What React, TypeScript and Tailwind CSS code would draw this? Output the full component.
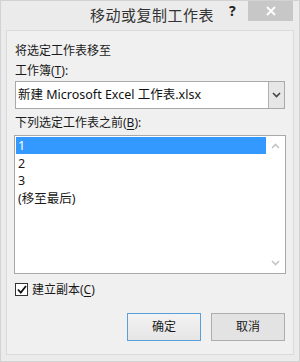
import React from "react";

const font = { fontFamily: '"Noto Sans", "Noto Sans CJK SC", sans-serif' };

export default function App() {
  return (
    <div
      className="w-[300px] h-[362px] bg-[#ebebeb] border border-[#d2d2d2] flex flex-col text-[12px] text-[#1a1a1a] overflow-hidden"
      style={font}
    >
      {/* title bar */}
      <div className="h-[29px] shrink-0 flex items-start relative">
        <div className="flex-1 h-[29px] flex items-center justify-center pl-[4px]">
          <span className="text-[15px] text-[#333] leading-none tracking-[0.5px]">移动或复制工作表</span>
        </div>
        <div className="absolute left-[228px] top-[2px] text-[14px] font-bold text-[#222] leading-[16px]">?</div>
        <div className="absolute left-[247px] top-0 w-[45px] h-[20px] bg-[#c7c7c7] flex items-center justify-center">
          <svg width="10" height="10" viewBox="0 0 10 10">
            <path d="M1 1 L9 9 M9 1 L1 9" stroke="#fff" strokeWidth="1.8" />
          </svg>
        </div>
      </div>
      {/* client */}
      <div className="mx-[5px] h-[325px] bg-[#f0f0f0] border border-[#dadada] flex flex-col px-[8px]">
        <div className="mt-[11px] h-[17px] leading-[17px]">将选定工作表移至</div>
        <div className="mt-[3px] h-[17px] leading-[17px]">
          工作簿(<span className="underline underline-offset-2">T</span>):
        </div>
        <div className="mt-[2px] h-[28px] bg-white border border-[#a9a9a9] flex items-stretch">
          <div className="flex-1 pl-[2px] flex items-center text-[12.5px] text-[#111]">
            新建 Microsoft Excel 工作表.xlsx
          </div>
          <div className="w-[16px] bg-[#e6e6e6] border-l border-[#b0b0b0] flex items-center justify-center">
            <svg width="9" height="6" viewBox="0 0 9 6">
              <path d="M1 1 L4.5 4.5 L8 1" stroke="#444" strokeWidth="1.6" fill="none" />
            </svg>
          </div>
        </div>
        <div className="mt-[5px] h-[17px] leading-[17px]">
          下列选定工作表之前(<span className="underline underline-offset-2">B</span>):
        </div>
        <div className="mt-[4px] -mx-[1px] h-[139px] bg-white border border-[#a9a9a9] flex p-[1px]">
          <div className="flex-1 flex flex-col text-[12.5px]">
            <div className="h-[17px] bg-[#3399ff] text-white pl-[2px] leading-[17px]">1</div>
            <div className="h-[17px] pl-[2px] leading-[17px] mt-[1px]">2</div>
            <div className="h-[17px] pl-[2px] leading-[17px]">3</div>
            <div className="h-[17px] pl-[2px] leading-[17px] mt-[1px]">(移至最后)</div>
          </div>
          <div className="w-[18px] flex flex-col items-center justify-between py-[6px]">
            <svg width="9" height="6" viewBox="0 0 9 6">
              <path d="M1 5 L4.5 1.5 L8 5" stroke="#c4c4c4" strokeWidth="1.6" fill="none" />
            </svg>
            <svg width="9" height="6" viewBox="0 0 9 6">
              <path d="M1 1 L4.5 4.5 L8 1" stroke="#c4c4c4" strokeWidth="1.6" fill="none" />
            </svg>
          </div>
        </div>
        <div className="mt-[8px] h-[15px] flex items-center gap-[4px]">
          <div className="w-[13px] h-[13px] bg-white border border-[#333] flex items-center justify-center">
            <svg width="10" height="9" viewBox="0 0 10 9">
              <path d="M1 4.5 L3.8 7.5 L9 1" stroke="#111" strokeWidth="1.8" fill="none" />
            </svg>
          </div>
          <span className="leading-[15px]">
            建立副本(<span className="underline underline-offset-2">C</span>)
          </span>
        </div>
        <div className="mt-[16px] flex justify-end gap-[10px] pr-[0px]">
          <div className="w-[74px] h-[28px] border border-[#5b9fd9] bg-gradient-to-b from-[#f3f3f3] to-[#e6e6e6] flex items-center justify-center">
            确定
          </div>
          <div className="w-[74px] h-[28px] border border-[#adadad] bg-[#e3e3e3] flex items-center justify-center">
            取消
          </div>
        </div>
      </div>
    </div>
  );
}
